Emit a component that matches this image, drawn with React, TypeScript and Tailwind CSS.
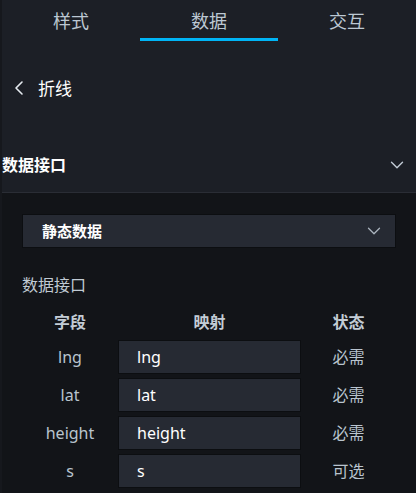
import { ChevronDown, ChevronLeft } from "lucide-react";

const ROWS: { field: string; map: string; state: string }[] = [
  { field: "lng", map: "lng", state: "必需" },
  { field: "lat", map: "lat", state: "必需" },
  { field: "height", map: "height", state: "必需" },
  { field: "s", map: "s", state: "可选" },
];

const FONT = { fontFamily: '"Noto Sans", "Noto Sans CJK SC", sans-serif' };

export default function App() {
  return (
    <div className="w-[416px] h-[493px] overflow-hidden bg-[#1c1f26] border-l-2 border-[#16181d] flex flex-col" style={FONT}>
      {/* tabs */}
      <div className="grid grid-cols-3 h-[41px] shrink-0">
        {["样式", "数据", "交互"].map((t, i) => (
          <div key={t} className="relative flex items-center justify-center text-[18px] leading-none text-[#bcc8d3]">
            {t}
            {i === 1 && <div className="absolute left-0 right-0 bottom-0 h-[3px] bg-[#00b4f5]" />}
          </div>
        ))}
      </div>

      {/* back row */}
      <div className="h-[94px] shrink-0 flex items-center pl-[5px] gap-[7px] text-white">
        <ChevronLeft size={24} strokeWidth={1.6} className="text-[#e6ebf0]" />
        <span className="text-[17px] leading-none">折线</span>
      </div>

      {/* section header */}
      <div className="h-[58px] shrink-0 flex items-center justify-between pr-[8px] pt-[2px] border-b border-[#2a2d35]">
        <span className="text-[16px] font-bold text-white leading-none">数据接口</span>
        <ChevronDown size={22} strokeWidth={1.5} className="text-[#c3ccd6]" />
      </div>

      {/* panel */}
      <div className="flex-1 bg-[#121418] pl-[20px] pr-[20px] pt-[21px]">
        <div className="h-[34px] bg-[#262a33] border border-[#0c0e11] flex items-center justify-between pl-[19px] pr-[10px]">
          <span className="text-[15px] font-bold text-white leading-none">静态数据</span>
          <ChevronDown size={22} strokeWidth={1.4} className="text-[#aab4be]" />
        </div>

        <div className="h-[38px] mt-[18px] flex items-center text-[16px] text-[#c0cad3] leading-none">数据接口</div>

        <div className="grid grid-cols-[96px_183px_1fr] items-start text-[16px] leading-none">
          <div className="h-[36px] flex items-center justify-center font-bold text-[#c3ccd5]">字段</div>
          <div className="h-[36px] flex items-center justify-center font-bold text-[#c3ccd5]">映射</div>
          <div className="h-[36px] flex items-center justify-center font-bold text-[#c3ccd5]">状态</div>
          {ROWS.map((r) => (
            <div key={r.field} className="contents">
              <div className="h-[34px] mb-[4px] flex items-center justify-center text-[#b9c4ce]">{r.field}</div>
              <div className="h-[34px] mb-[4px] bg-[#262a33] border border-[#0c0e11] flex items-center pl-[18px] text-white">{r.map}</div>
              <div className="h-[34px] mb-[4px] flex items-center justify-center text-[#b9c4ce]">{r.state}</div>
            </div>
          ))}
        </div>
      </div>
    </div>
  );
}
